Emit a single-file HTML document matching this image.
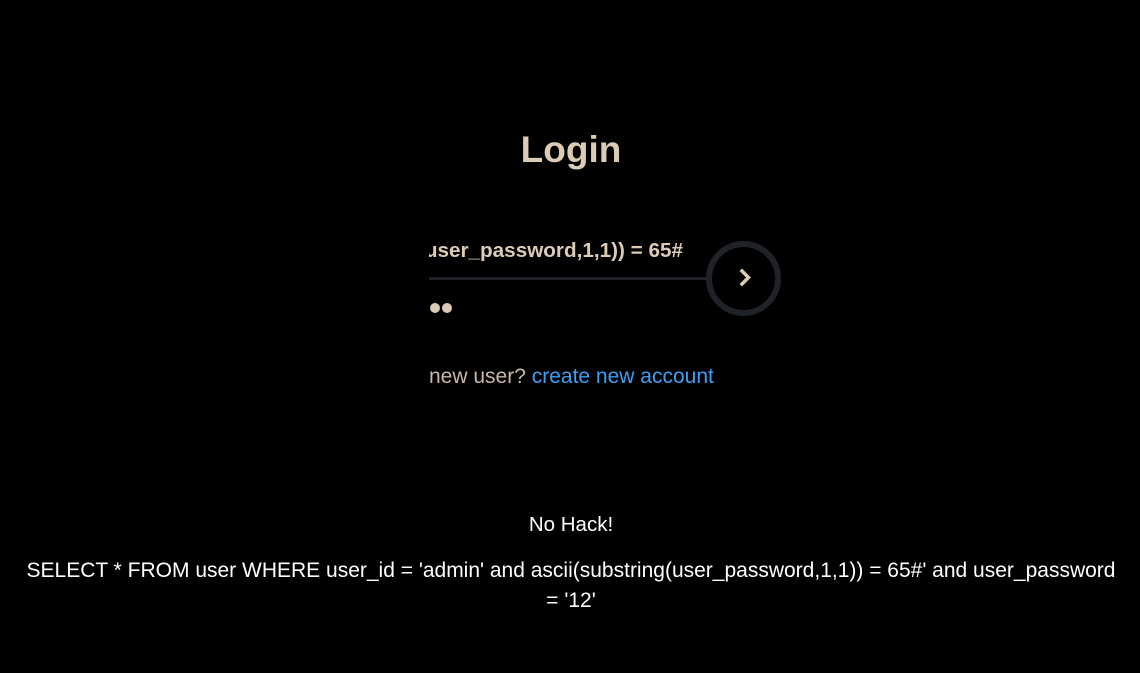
<!DOCTYPE html>
<html><head><meta charset="utf-8"><style>
html,body{margin:0;padding:0;background:#000;width:1140px;height:673px;overflow:hidden;font-family:"Liberation Sans",Arial,sans-serif;}
.abs{position:absolute;}
#title{left:0;width:1142px;top:128px;text-align:center;font-weight:bold;font-size:37px;color:#dccbb5;line-height:44px;}
#inp{left:429px;top:237px;width:262px;height:32px;overflow:hidden;}
#inp span{position:absolute;right:8px;top:2px;white-space:nowrap;font-weight:bold;font-size:20.7px;color:#dccbb5;}
#line{left:429px;top:277px;width:282px;height:3px;background:#1f2327;}
#circ{left:706px;top:241px;width:63px;height:63px;border:6px solid #1f2327;border-radius:50%;background:#000;}
#dots{left:430px;top:300px;}
#dots i{display:inline-block;width:10px;height:10px;border-radius:50%;background:#dccbb5;margin-right:2px;}
#nu{left:429px;top:365px;font-size:21px;color:#c8b9a6;white-space:nowrap;}
#nu a{color:#3ea0f5;text-decoration:none;}
#nh{left:0;width:1142px;top:513px;text-align:center;font-size:20.5px;color:#fff;}
#sql{left:0;width:1142px;top:556px;text-align:center;font-size:21px;line-height:30px;color:#fff;white-space:nowrap;}
</style></head><body>
<div id="title" class="abs">Login</div>
<div id="inp" class="abs"><span>admin' and ascii(substring(user_password,1,1)) = 65#</span></div>
<div id="line" class="abs"></div>
<div id="circ" class="abs"><svg width="63" height="63" viewBox="0 0 63 63"><path d="M32 27 L38.5 33.5 L32 40" fill="none" stroke="#dccbb5" stroke-width="3.5" stroke-linecap="square" transform="translate(-2,-3)"/></svg></div>
<div id="dots" class="abs"><i></i><i></i></div>
<div id="nu" class="abs">new user? <a>create new account</a></div>
<div id="nh" class="abs">No Hack!</div>
<div id="sql" class="abs">SELECT * FROM user WHERE user_id = 'admin' and ascii(substring(user_password,1,1)) = 65#' and user_password<br>= '12'</div>
</body></html>
